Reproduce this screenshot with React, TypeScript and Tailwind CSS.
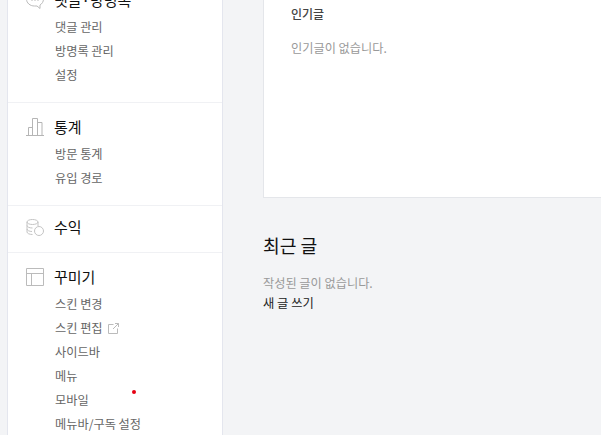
import React from "react";

const font = { fontFamily: '"Noto Sans CJK KR", "Noto Sans", sans-serif' };

function Item({ children }: { children: React.ReactNode }) {
  return <li className="h-6 leading-6 text-[12.2px] text-[#666]">{children}</li>;
}

function Head({ icon, title }: { icon: React.ReactNode; title: string }) {
  return (
    <div className="flex items-center h-6">
      <div className="w-[28px] ml-[18px] flex items-center">{icon}</div>
      <span className="text-[15px] text-[#111]">{title}</span>
    </div>
  );
}

const Chat = (
  <svg width="20" height="20" viewBox="0 0 20 20" fill="none" stroke="#bbb" strokeWidth="1" className="-ml-px">
    <path d="M10 2C5 2 1.5 5 1.5 9s3.5 7 8 7h2.5l3 2.5V15c2-1.2 3.5-3.3 3.5-6 0-4-3.5-7-8.5-7z" />
    <path d="M6.5 10.5h1M9.5 10.5h1M12.5 10.5h1" />
  </svg>
);
const Bars = (
  <svg width="18" height="18" viewBox="0 0 18 18" fill="none" stroke="#b5b5b5" strokeWidth="1">
    <path d="M0 17.5h18M2.5 17.5v-8h4v8M6.5 17.5V.5h5v17M11.5 17.5v-13h4.5v13" />
  </svg>
);
const Coins = (
  <svg width="18" height="17" viewBox="0 0 18 17" fill="none" stroke="#c4c4c4" strokeWidth="1">
    <ellipse cx="6.5" cy="3" rx="5.5" ry="2.5" />
    <path d="M1 3v10c0 1.4 2.5 2.5 5.5 2.5M1 6.5C1 8 3.5 9 6.5 9M1 10c0 1.4 2.5 2.5 5 2.5M12 3v4" />
    <circle cx="13" cy="12" r="4.5" fill="#fff" />
  </svg>
);
const Layout = (
  <svg width="18" height="18" viewBox="0 0 18 18" fill="none" stroke="#bbb" strokeWidth="1">
    <path d="M.5.5h17v17H.5zM.5 5.5h17M5.5 5.5v12" />
  </svg>
);
const External = (
  <svg width="11" height="11" viewBox="0 0 11 11" fill="none" stroke="#bbb" strokeWidth="1" className="ml-[5px]">
    <path d="M5.5 1.5H.5v9h9V5.5M5 6l5.5-5.5M7 .5h3.5V4" />
  </svg>
);

export default function App() {
  return (
    <div style={font} className="w-[601px] h-[435px] overflow-hidden bg-[#f3f4f6] flex">
      <aside className="ml-[7px] w-[216px] shrink-0 bg-white border-x border-[#e4e6ee] -mt-[12px] h-[460px] overflow-hidden">
        <section className="pb-[15px] border-b border-[#f0f1f4]">
          <Head icon={Chat} title="댓글·방명록" />
          <ul className="pl-[47px] pt-[3px]">
            <Item>댓글 관리</Item>
            <Item>방명록 관리</Item>
            <Item>설정</Item>
          </ul>
        </section>
        <section className="pt-[12px] pb-[15px] border-b border-[#f0f1f4]">
          <Head icon={Bars} title="통계" />
          <ul className="pl-[47px] pt-[3px]">
            <Item>방문 통계</Item>
            <Item>유입 경로</Item>
          </ul>
        </section>
        <section className="pt-[9px] pb-[13px] border-b border-[#f0f1f4]">
          <Head icon={Coins} title="수익" />
        </section>
        <section className="pt-[12px]">
          <Head icon={Layout} title="꾸미기" />
          <ul className="pl-[47px] pt-[3px]">
            <Item>스킨 변경</Item>
            <Item>
              <span className="flex items-center">스킨 편집{External}</span>
            </Item>
            <Item>사이드바</Item>
            <Item>메뉴</Item>
            <Item>모바일</Item>
            <Item>메뉴바/구독 설정</Item>
          </ul>
        </section>
      </aside>
      <main className="flex-1 ml-[40px] min-w-0">
        <div className="h-[198px] bg-white border-l border-b border-[#e4e6ea] pl-[27px] pt-[4px]">
          <h3 className="text-[12px] leading-5 font-medium text-[#444]">인기글</h3>
          <p className="mt-[14px] text-[12.2px] leading-5 text-[#999]">인기글이 없습니다.</p>
        </div>
        <h2 className="mt-[33px] text-[18.2px] leading-[28px] text-[#111]">최근 글</h2>
        <p className="mt-[14px] text-[12.2px] leading-5 text-[#999]">작성된 글이 없습니다.</p>
        <a className="block text-[12.3px] leading-5 text-[#222]">새 글 쓰기</a>
      </main>
      <div className="absolute left-[132px] top-[390px] w-[4px] h-[4px] rounded-full bg-[#e60012]" />
    </div>
  );
}
